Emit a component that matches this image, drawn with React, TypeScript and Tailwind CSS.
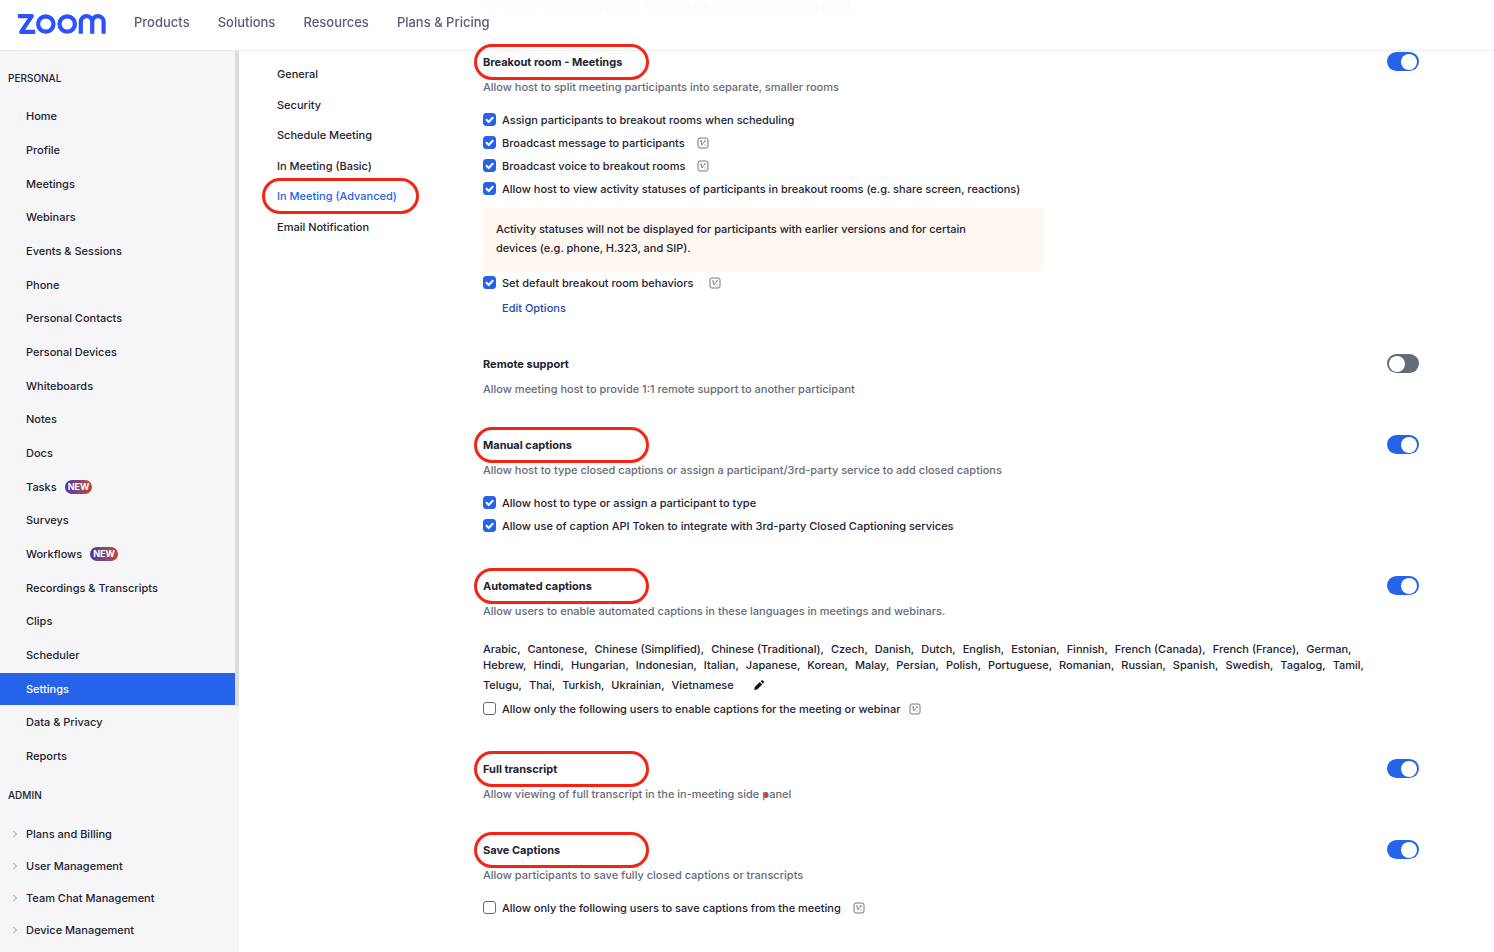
import {useState} from 'react'

const personalLinks = [
  {label: 'Home'},
  {label: 'Profile'},
  {label: 'Meetings'},
  {label: 'Webinars'},
  {label: 'Events & Sessions'},
  {label: 'Phone'},
  {label: 'Personal Contacts'},
  {label: 'Personal Devices'},
  {label: 'Whiteboards'},
  {label: 'Notes'},
  {label: 'Docs'},
  {label: 'Tasks', isNew: true},
  {label: 'Surveys'},
  {label: 'Workflows', isNew: true},
  {label: 'Recordings & Transcripts'},
  {label: 'Clips'},
  {label: 'Scheduler'},
  {label: 'Settings'},
  {label: 'Data & Privacy'},
  {label: 'Reports'}
]

const adminLinks = ['Plans and Billing', 'User Management', 'Team Chat Management', 'Device Management']

const topLinks = ['Products', 'Solutions', 'Resources', 'Plans & Pricing']

const settingTabs = [
  'General',
  'Security',
  'Schedule Meeting',
  'In Meeting (Basic)',
  'In Meeting (Advanced)',
  'Email Notification'
]

const languages = [
  'Arabic', 'Cantonese', 'Chinese (Simplified)', 'Chinese (Traditional)', 'Czech', 'Danish', 'Dutch', 'English',
  'Estonian', 'Finnish', 'French (Canada)', 'French (France)', 'German', 'Hebrew', 'Hindi', 'Hungarian',
  'Indonesian', 'Italian', 'Japanese', 'Korean', 'Malay', 'Persian', 'Polish', 'Portuguese', 'Romanian',
  'Russian', 'Spanish', 'Swedish', 'Tagalog', 'Tamil', 'Telugu', 'Thai', 'Turkish', 'Ukrainian', 'Vietnamese'
]

const Logo = () => (
  <svg width="88" height="20" viewBox="0 0 88 20" fill="none" stroke="#2a52ff" strokeWidth="4.2" aria-label="Zoom">
    <path d="M0 2.100h13.800L3.200 17.900H17.200" strokeLinejoin="round" />
    <circle cx="27.800" cy="10" r="7.700" />
    <circle cx="49.200" cy="10" r="7.700" />
    <path d="M62.800 19.700V7.800a5.700 5.700 0 0 1 11.400 0V19.700M74.200 7.800a5.700 5.700 0 0 1 11.400 0V19.700" />
  </svg>
)

const InfoIcon = ({className}: {className: string}) => (
  <svg width="12" height="12" viewBox="0 0 12 12" fill="none" stroke="#747487" className={`shrink-0 ${className}`}>
    <rect x="1" y="1" width="10" height="10" rx="2" />
    <path d="M3 4h2M4.200 4l.6 4L8 4M6.800 4H9" strokeWidth=".9" />
    <path d="M7.500 8h1" />
  </svg>
)

const Toggle = ({label, initial}: {label: string; initial: boolean}) => {
  const [on, setOn] = useState(initial)

  return (
    <button
      type="button"
      role="switch"
      aria-checked={on}
      aria-label={label}
      onClick={() => setOn(prev => !prev)}
      className={`mt-0.5 flex h-[19px] w-8 shrink-0 items-center rounded-full px-0.5 ${
        on ? 'justify-end bg-[#2563eb]' : 'justify-start bg-[#666b78]'
      }`}
    >
      <span className="size-4 rounded-full bg-white"></span>
    </button>
  )
}

const Option = ({label, checked, info}: {label: string; checked?: boolean; info?: string}) => {
  const [isChecked, setIsChecked] = useState(!!checked)

  return (
    <div className="flex h-[23px] items-center">
      <label className="flex items-center gap-1.5">
        <span className="relative flex size-[13px]">
          <input
            type="checkbox"
            checked={isChecked}
            onChange={() => setIsChecked(prev => !prev)}
            className="size-[13px] appearance-none rounded-[3px] border border-[#666b78] bg-white checked:border-[#2563eb] checked:bg-[#2563eb]"
          />
          {isChecked && (
            <svg viewBox="0 0 13 13" fill="none" stroke="white" className="pointer-events-none absolute inset-0">
              <path d="M3.500 6.800l2.200 2.200 4-4.300" strokeWidth="2" strokeLinecap="round" />
            </svg>
          )}
        </span>
        <span>{label}</span>
      </label>
      {info && <InfoIcon className={info} />}
    </div>
  )
}

const Highlight = ({className}: {className: string}) => (
  <span className={`pointer-events-none absolute z-20 h-9 rounded-full border-3 border-[#f52314] ${className}`}></span>
)

interface settingI {
  title: string
  description: React.ReactNode
  on?: boolean
  marked?: boolean
  children?: React.ReactNode
}

const Setting = ({title, description, on = true, marked = true, children}: settingI) => (
  <section className="flex items-start justify-between pb-[31px]">
    <div className="min-w-0 max-w-[896px] flex-1">
      <h3 className="relative h-6 font-bold leading-6">
        {title}
        {marked && <Highlight className="-left-[9px] -top-1.5 w-[175px]" />}
      </h3>
      <p className="leading-[26px] text-[#666b78]">{description}</p>
      {children}
    </div>
    <Toggle label={title} initial={on} />
  </section>
)

const Sidebar = () => (
  <aside className="relative w-[239px] shrink-0 bg-[#f6f6f8] pt-[51px]">
    <div className="absolute right-0 top-[51px] h-[655px] w-1 bg-[#dcdcdc]"></div>
    <h2 className="mt-[17px] pl-2 text-[10px] leading-5">PERSONAL</h2>
    <nav className="mr-1 mt-3">
      {personalLinks.map(link => (
        <a
          key={link.label}
          href="#"
          className={`mb-0.5 flex h-8 items-center gap-2 pl-[26px] [&:nth-child(3n)]:mb-px ${
            link.label === 'Settings' ? 'bg-[#2563eb] text-white' : ''
          }`}
        >
          {link.label}
          {link.isNew && (
            <span className="rounded-full bg-linear-to-r from-[#4f2fa8] to-[#c1441e] px-[3px] text-[9px] font-bold leading-[14px] text-white">
              NEW
            </span>
          )}
        </a>
      ))}
    </nav>
    <h2 className="mt-[13px] pl-2 text-[10px] leading-5">ADMIN</h2>
    <nav className="mt-[13px]">
      {adminLinks.map(label => (
        <a key={label} href="#" className="flex h-8 items-center gap-2 pl-3">
          <svg width="6" height="8" viewBox="0 0 6 8" fill="none" stroke="#8f8fa8">
            <path d="M1.500 1l3 3-3 3" />
          </svg>
          {label}
        </a>
      ))}
    </nav>
  </aside>
)

const App = () => {
  return (
    <div className="flex min-h-screen bg-white font-['Inter','Liberation_Sans',sans-serif] text-[11px] font-medium leading-4 text-[#222230]">
      <header className="fixed inset-x-0 top-0 z-10 flex h-[51px] items-start border-b border-[#ededf0] bg-white/97 pl-[18px]">
        <a href="#" className="mt-3.5">
          <Logo />
        </a>
        <nav className="ml-7 mt-3 flex gap-7 text-[13px] leading-5 text-[#5c5a7d]">
          {topLinks.map(label => (
            <a key={label} href="#">
              {label}
            </a>
          ))}
        </nav>
      </header>

      <Sidebar />

      <nav className="w-[244px] shrink-0 pl-[38px] pt-[59px]">
        {settingTabs.map(tab => (
          <a key={tab} href="#" className="block leading-[30px] odd:mb-px">
            {tab === 'In Meeting (Advanced)' ? (
              <span className="relative inline-block text-[#2563eb]">
                {tab}
                <Highlight className="-left-[15px] -top-[3px] w-[157px]" />
              </span>
            ) : (
              tab
            )}
          </a>
        ))}
      </nav>

      <main className="min-w-0 flex-1 pr-[75px]">
        <p className="mb-[37px] leading-[13px] text-[#666b78]">
          for review. This setting can be found on the meeting information panel.
        </p>

        <Setting
          title="Breakout room - Meetings"
          description="Allow host to split meeting participants into separate, smaller rooms"
        >
          <div className="pb-[5px] pt-2">
            <Option label="Assign participants to breakout rooms when scheduling" checked />
            <Option label="Broadcast message to participants" checked info="ml-3" />
            <Option label="Broadcast voice to breakout rooms" checked info="ml-3" />
            <Option
              label="Allow host to view activity statuses of participants in breakout rooms (e.g. share screen, reactions)"
              checked
            />
            <div className="mt-2 max-w-[560px] rounded bg-[#fff7f0] pb-[13px] pl-[13px] pr-12 pt-3 leading-[19px]">
              Activity statuses will not be displayed for participants with earlier versions and for certain devices
              (e.g. phone, H.323, and SIP).
            </div>
            <Option label="Set default breakout room behaviors" checked info="ml-4" />
            <a href="#" className="ml-[19px] mt-1.5 block w-fit leading-4 text-[#1e49b0]">
              Edit Options
            </a>
          </div>
        </Setting>

        <Setting
          title="Remote support"
          description="Allow meeting host to provide 1:1 remote support to another participant"
          on={false}
          marked={false}
        />

        <Setting
          title="Manual captions"
          description="Allow host to type closed captions or assign a participant/3rd-party service to add closed captions"
        >
          <div className="pb-1.5 pt-2">
            <Option label="Allow host to type or assign a participant to type" checked />
            <Option label="Allow use of caption API Token to integrate with 3rd-party Closed Captioning services" checked />
          </div>
        </Setting>

        <Setting
          title="Automated captions"
          description="Allow users to enable automated captions in these languages in meetings and webinars."
        >
          <div className="pb-1.5 pt-[17px]">
            <div className="flex flex-wrap items-center gap-x-[7px]">
              {languages.map((language, index) => (
                <span key={language}>
                  {language}
                  {index < languages.length - 1 && ','}
                </span>
              ))}
              <button type="button" aria-label="Edit languages" className="ml-3 flex h-6 items-center">
                <svg width="12" height="12" viewBox="0 0 12 12" fill="#131619">
                  <path d="M1.200 11l.6-3L6.800 3l2.400 2.400-5 5zM7.500 2.300l.9-.9a1 1 0 0 1 1.400 0l1 1a1 1 0 0 1 0 1.400l-.9.9z" />
                </svg>
              </button>
            </div>
            <Option label="Allow only the following users to enable captions for the meeting or webinar" info="ml-2" />
          </div>
        </Setting>

        <Setting
          title="Full transcript"
          description={
            <>
              Allow viewing of full transcript in the in-meeting side{' '}
              <span className="relative">
                panel
                <span className="absolute left-0.5 top-1.5 size-1 rounded-full bg-[#f52314]"></span>
              </span>
            </>
          }
        />

        <Setting title="Save Captions" description="Allow participants to save fully closed captions or transcripts">
          <div className="pt-2">
            <Option label="Allow only the following users to save captions from the meeting" info="ml-3" />
          </div>
        </Setting>
      </main>
    </div>
  )
}

export default App
